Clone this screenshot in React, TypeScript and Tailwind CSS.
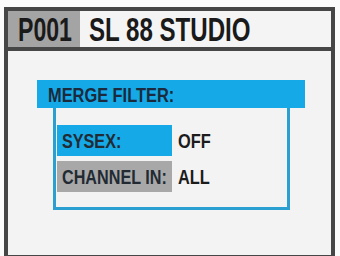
import React from 'react'

const font = { fontFamily: '"Liberation Sans", Arial, sans-serif' }

const Squeeze = ({ children, className = '' }: { children: React.ReactNode; className?: string }) => (
  <span className={`inline-block origin-left whitespace-nowrap ${className}`}>{children}</span>
)

const Row = ({ label, value, tone }: { label: string; value: string; tone: string }) => (
  <div className="flex items-center h-[31px]">
    <div className={`w-[115px] h-full flex items-center pl-[5px] ${tone}`}>
      <Squeeze className="text-[21px] font-bold leading-none text-[#222a33] scale-x-[0.77]">{label}</Squeeze>
    </div>
    <div className="pl-[6px] flex items-center">
      <Squeeze className="text-[21px] font-bold leading-none text-[#1c1c1c] scale-x-[0.78]">{value}</Squeeze>
    </div>
  </div>
)

export default function App() {
  return (
    <div className="w-[340px] h-[256px] bg-[#fbfbfb] pt-[7px] pl-[4px] overflow-hidden" style={font}>
      <div className="w-[331px] h-[252px] border-4 border-[#464646] bg-[#f3f3f3] flex flex-col">
        {/* title bar */}
        <div className="h-[40px] border-b-4 border-[#464646] flex items-stretch bg-[#f4f4f4]">
          <div className="w-[72px] bg-[#a4a4a4] flex items-center pl-[10px]">
            <Squeeze className="text-[33px] font-bold leading-none text-[#1a1a1a] scale-x-[0.70]">P001</Squeeze>
          </div>
          <div className="flex items-center pl-[9px]">
            <Squeeze className="text-[33px] font-bold leading-none text-[#1a1a1a] scale-x-[0.73]">SL 88 STUDIO</Squeeze>
          </div>
        </div>

        {/* merge filter section */}
        <div className="pt-[29px] pl-[29px]">
          <div className="w-[268px] h-[28px] bg-[#15a9e7] flex items-center pl-[11px]">
            <Squeeze className="text-[21px] font-bold leading-none text-[#1b2a3c] scale-x-[0.78]">MERGE FILTER:</Squeeze>
          </div>
          <div className="ml-[16px] w-[237px] border-x-[3px] border-b-[3px] border-[#2b9fd0] pt-[17px] pb-[15px] pl-[1px] flex flex-col gap-[5px]">
            <Row label="SYSEX:" value="OFF" tone="bg-[#15a9e7]" />
            <Row label="CHANNEL IN:" value="ALL" tone="bg-[#a9a8a8]" />
          </div>
        </div>
      </div>
    </div>
  )
}
